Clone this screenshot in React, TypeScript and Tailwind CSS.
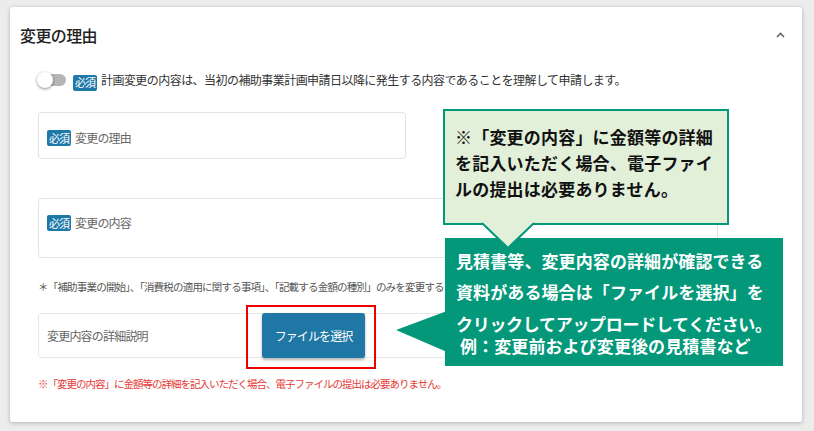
const jp = { fontFamily: '"Noto Sans CJK JP", "Noto Sans", sans-serif' };

const Badge = () => (
  <span className="inline-flex items-center justify-center w-[24px] h-[16px] bg-[#1f79a8] text-white text-[11px] tracking-[-1px] rounded-[2px] leading-none">
    必須
  </span>
);

const App = () => {
  return (
    <div className="relative w-[814px] h-[431px] bg-[#ececec] overflow-hidden" style={jp}>
      <div className="absolute left-0 top-0 pt-[7px] pl-[10px]">
        <section className="w-[792px] h-[415px] bg-white rounded-[3px] shadow-[0_1px_4px_rgba(0,0,0,0.25)]">
          {/* header */}
          <header className="h-[56px] flex items-center justify-between pl-[10px] pr-[17px]">
            <h1 className="text-[16px] font-medium tracking-[-0.6px] text-[#222]">変更の理由</h1>
            <svg width="9" height="6" viewBox="0 0 9 6">
              <path d="M1 5 L4.5 1.5 L8 5" fill="none" stroke="#666" strokeWidth="1.6" />
            </svg>
          </header>

          {/* agree toggle */}
          <div className="mt-[8px] pl-[27px] flex items-center h-[18px]">
            <div className="relative w-[29px] h-[16px] flex items-center">
              <div className="w-[27px] h-[12px] ml-[2px] rounded-full bg-[#b5b5b5]" />
              <div className="absolute left-0 top-0 w-[16px] h-[16px] rounded-full bg-white shadow-[0_1px_3px_rgba(0,0,0,0.45)]" />
            </div>
            <div className="ml-[7px]">
              <Badge />
            </div>
            <p className="ml-[4px] text-[12px] tracking-[-0.55px] text-[#333]">
              計画変更の内容は、当初の補助事業計画申請日以降に発生する内容であることを理解して申請します。
            </p>
          </div>

          <div className="pl-[28px] pr-[30px]">
            {/* reason */}
            <div className="mt-[23px] w-[368px] h-[47px] border border-[#e2e2e2] rounded-[4px] pl-[8px] pt-[17px] flex items-start">
              <Badge />
              <span className="ml-[4px] -mt-[1px] text-[12px] tracking-[-0.8px] text-[#666]">変更の理由</span>
            </div>

            {/* content */}
            <div className="mt-[39px] w-[680px] h-[60px] border border-[#e2e2e2] rounded-[4px] pl-[8px] pt-[16px] flex items-start">
              <Badge />
              <span className="ml-[4px] -mt-[1px] text-[12px] tracking-[-0.8px] text-[#666]">変更の内容</span>
            </div>

            <p className="mt-[22px] w-[406px] overflow-hidden h-[14px] leading-[14px] whitespace-nowrap text-[10.5px] tracking-[-0.8px] text-[#555]">
              ＊「補助事業の開始」、「消費税の適用に関する事項」、「記載する金額の種別」のみを変更する場合は、変更の内容欄への記入は不要です。
            </p>

            {/* detail file row */}
            <div className="mt-[19px] h-[45px] border border-[#e8e8e8] rounded-[3px] flex items-center">
              <span className="w-[223px] pl-[8px] text-[12px] tracking-[-0.8px] text-[#666]">変更内容の詳細説明</span>
              <div className="relative">
                <button className="w-[103px] h-[45px] bg-[#1f77a5] text-white text-[12px] tracking-[-0.9px] rounded-[3px] shadow-[0_2px_3px_rgba(0,0,0,0.3)]">
                  ファイルを選択
                </button>
                <div className="absolute left-[-16px] top-[-8px] w-[130px] h-[64px] border-2 border-[#ee0000] pointer-events-none" />
              </div>
            </div>

            <p className="mt-[18px] text-[10.5px] tracking-[-1px] text-[#e53935]">
              ※「変更の内容」に金額等の詳細を記入いただく場合、電子ファイルの提出は必要ありません。
            </p>
          </div>
        </section>
      </div>

      {/* callout 2: green solid */}
      <svg className="absolute left-[390px] top-[300px]" width="60" height="60" viewBox="0 0 60 60">
        <polygon points="57,11 6,30 57,52" fill="#03987a" />
      </svg>
      <div className="absolute left-[445px] top-[238px] w-[338px] h-[128px] bg-[#03987a] text-white font-bold text-[17px] tracking-[0.1px] pl-[11px] whitespace-nowrap">
        <div className="mt-[11px] leading-[24px]">見積書等、変更内容の詳細が確認できる</div>
        <div className="mt-[7px] leading-[24px]">資料がある場合は「ファイルを選択」を</div>
        <div className="mt-[9px] leading-[22px] tracking-[-0.3px]">クリックしてアップロードしてください。</div>
        <div className="leading-[22px] pl-[4px]">例：変更前および変更後の見積書など</div>
      </div>

      {/* callout 1: light */}
      <div className="absolute left-[443px] top-[109px] w-[286px] h-[116px] bg-[#e2efd9] border-2 border-[#03987a] text-[#111] font-bold text-[17px] tracking-[0.2px] leading-[26px] pl-[10px] pt-[13px] whitespace-nowrap">
        <div>※「変更の内容」に金額等の詳細</div>
        <div>を記入いただく場合、電子ファイ</div>
        <div>ルの提出は必要ありません。</div>
      </div>
      <svg className="absolute left-[478px] top-[221px]" width="60" height="30" viewBox="0 0 60 30">
        <polygon points="4,2 30,27 56,2" fill="#e2efd9" />
        <polyline points="4,2 30,27 56,2" fill="none" stroke="#03987a" strokeWidth="2" />
        <rect x="6" y="0" width="48" height="3" fill="#e2efd9" />
      </svg>
    </div>
  );
};

export default App;
